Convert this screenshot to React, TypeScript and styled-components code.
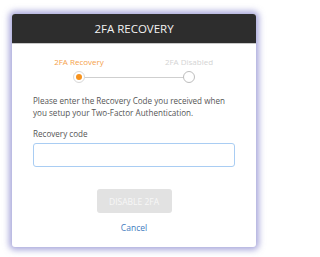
import React from "react";
import styled, { createGlobalStyle } from "styled-components";

const GlobalStyle = createGlobalStyle`
  html, body {
    margin: 0;
    padding: 0;
    background: #ffffff;
  }
  body {
    font-family: "Open Sans", "Liberation Sans", sans-serif;
  }
  * {
    box-sizing: border-box;
  }
`;

const Page = styled.div`
  width: 268px;
  height: 257px;
  padding: 14px 12px 10px 12px;
`;

const Card = styled.div`
  width: 244px;
  height: 233px;
  background: #ffffff;
  border-radius: 3px;
  overflow: hidden;
  box-shadow: 0 0 6px 3px rgba(98, 96, 190, 0.55);
  display: flex;
  flex-direction: column;
`;

const Header = styled.div`
  height: 30px;
  background: #2d2d2d;
  border-bottom: 1px solid #c8c8c8;
  color: #f2f2f2;
  font-size: 11.5px;
  display: flex;
  align-items: center;
  justify-content: center;
`;

const Body = styled.div`
  padding: 12px 21px 0 21px;
  display: flex;
  flex-direction: column;
`;

const Steps = styled.div`
  display: flex;
  justify-content: center;
  position: relative;
  margin: 0 -10px;
`;

const Step = styled.div`
  width: 110px;
  flex-shrink: 0;
  display: flex;
  flex-direction: column;
  align-items: center;
  gap: 4px;
  position: relative;
  z-index: 1;
`;

const StepLabel = styled.span<{ active: boolean }>`
  font-size: 8px;
  line-height: 11px;
  color: ${({ active }) => (active ? "#f5a24a" : "#d4d4d4")};
`;

const Dot = styled.span<{ active: boolean }>`
  width: 12px;
  height: 12px;
  border-radius: 50%;
  background: #ffffff;
  border: 1px solid ${({ active }) => (active ? "#d8d8d8" : "#bdbdbd")};
  display: flex;
  align-items: center;
  justify-content: center;

  &::after {
    content: "";
    width: 6px;
    height: 6px;
    border-radius: 50%;
    background: ${({ active }) => (active ? "#f7931e" : "transparent")};
  }
`;

const StepLine = styled.span`
  position: absolute;
  left: 50%;
  transform: translateX(-50%);
  top: 20.5px;
  width: 104px;
  height: 1px;
  background: #cfcfcf;
`;

const Intro = styled.p`
  margin: 12px 0 0 0;
  font-size: 8.1px;
  line-height: 12px;
  color: #555555;
`;

const Label = styled.label`
  margin-top: 9px;
  font-size: 8.1px;
  line-height: 12px;
  color: #555555;
`;

const Input = styled.input`
  margin-top: 3px;
  height: 24px;
  width: 100%;
  border: 1px solid #a9cdf3;
  border-radius: 3px;
  outline: none;
  font-family: inherit;
`;

const Actions = styled.div`
  margin-top: 22px;
  display: flex;
  flex-direction: column;
  align-items: center;
  gap: 9px;
`;

const Button = styled.button`
  width: 75px;
  height: 24px;
  padding: 0;
  border: none;
  border-radius: 3px;
  background: #e2e2e2;
  color: #f7f7f7;
  font-family: inherit;
  font-size: 8.5px;
  text-transform: uppercase;
`;

const CancelLink = styled.a`
  font-size: 8.5px;
  line-height: 12px;
  color: #3f7cc0;
  text-decoration: none;
`;

export default function App() {
  return (
    <Page>
      <GlobalStyle />
      <Card>
        <Header>2FA RECOVERY</Header>
        <Body>
          <Steps>
            <StepLine />
            <Step>
              <StepLabel active>2FA Recovery</StepLabel>
              <Dot active />
            </Step>
            <Step>
              <StepLabel active={false}>2FA Disabled</StepLabel>
              <Dot active={false} />
            </Step>
          </Steps>
          <Intro>
            Please enter the Recovery Code you received when you setup your
            Two-Factor Authentication.
          </Intro>
          <Label htmlFor="code">Recovery code</Label>
          <Input id="code" type="text" />
          <Actions>
            <Button disabled>Disable 2FA</Button>
            <CancelLink href="#">Cancel</CancelLink>
          </Actions>
        </Body>
      </Card>
    </Page>
  );
}
